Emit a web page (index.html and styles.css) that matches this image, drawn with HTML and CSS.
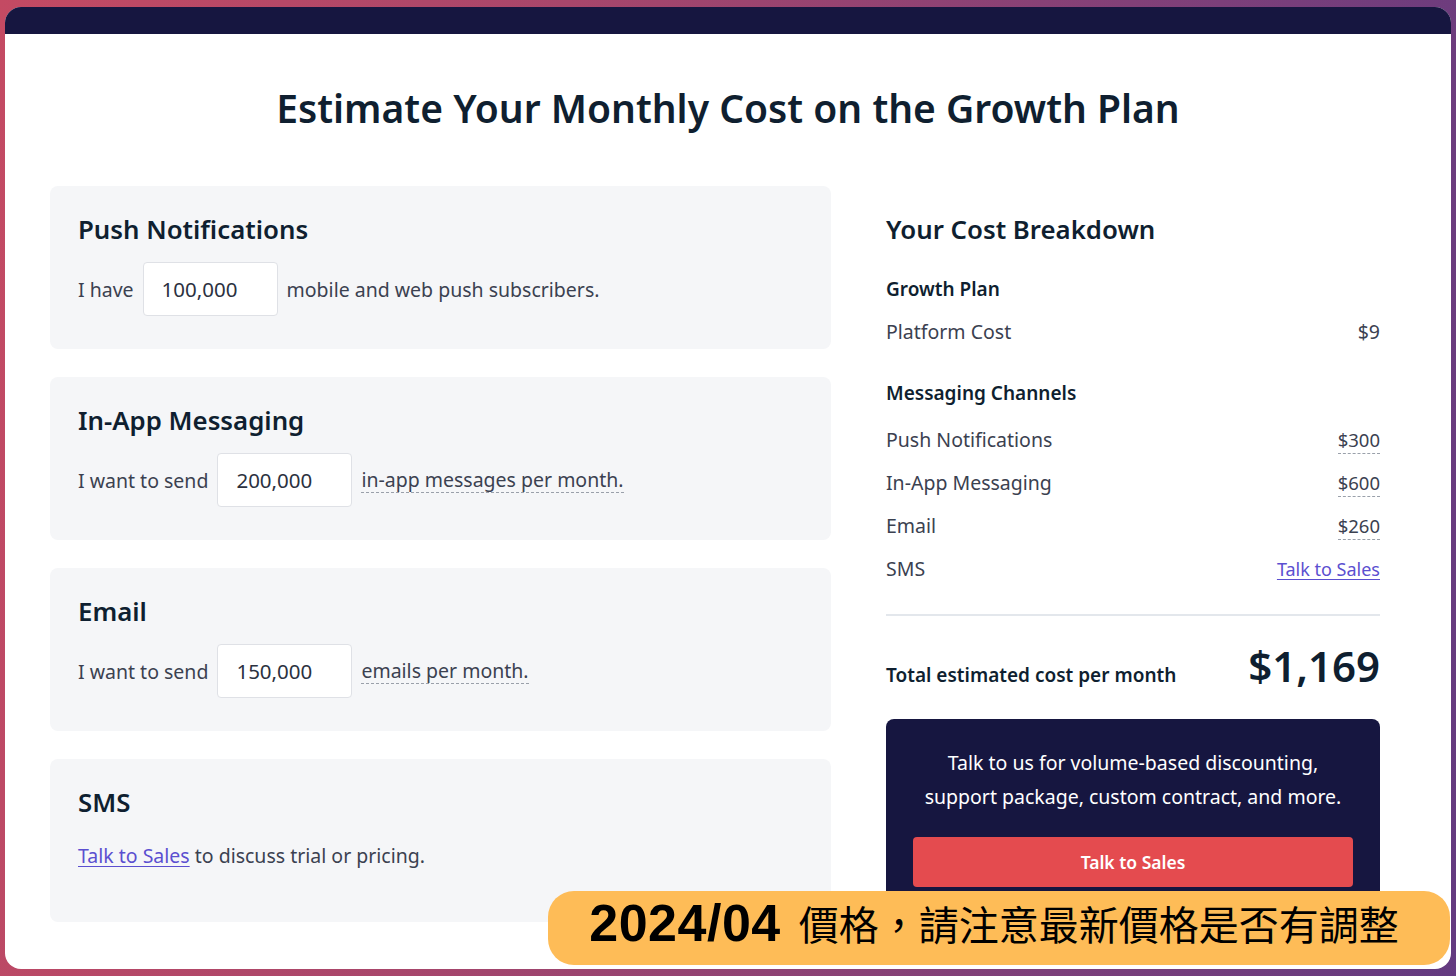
FILE: index.html
```html
<!DOCTYPE html>
<html lang="en">
<head>
<meta charset="utf-8">
<title>Estimate Your Monthly Cost</title>
<link rel="stylesheet" href="styles.css">
</head>
<body>
<div class="frame">
  <div class="panel">
    <div class="topbar"></div>
    <h1 class="title">Estimate Your Monthly Cost on the Growth Plan</h1>
    <div class="content">
      <div class="grid">
        <div class="left">
          <section class="card">
            <h2 class="card-title">Push Notifications</h2>
            <div class="row">
              <span>I have</span>
              <span class="input">100,000</span>
              <span>mobile and web push subscribers.</span>
            </div>
          </section>
          <section class="card">
            <h2 class="card-title">In-App Messaging</h2>
            <div class="row">
              <span>I want to send</span>
              <span class="input">200,000</span>
              <span class="dotted">in-app messages per month.</span>
            </div>
          </section>
          <section class="card">
            <h2 class="card-title">Email</h2>
            <div class="row">
              <span>I want to send</span>
              <span class="input">150,000</span>
              <span class="dotted">emails per month.</span>
            </div>
          </section>
          <section class="card">
            <h2 class="card-title">SMS</h2>
            <p class="sms-text"><a class="link" href="#">Talk to Sales</a> to discuss trial or pricing.</p>
          </section>
        </div>
        <aside class="right">
          <h2 class="card-title">Your Cost Breakdown</h2>
          <h3 class="sub sub-first">Growth Plan</h3>
          <div class="line line-platform"><span>Platform Cost</span><span>$9</span></div>
          <h3 class="sub sub-second">Messaging Channels</h3>
          <div class="lines">
            <div class="line"><span>Push Notifications</span><span class="price">$300</span></div>
            <div class="line"><span>In-App Messaging</span><span class="price">$600</span></div>
            <div class="line"><span>Email</span><span class="price">$260</span></div>
            <div class="line"><span>SMS</span><a class="link link-small" href="#">Talk to Sales</a></div>
          </div>
          <hr class="divider">
          <div class="total">
            <span class="total-label">Total estimated cost per month</span>
            <span class="total-value">$1,169</span>
          </div>
          <div class="cta">
            <p class="cta-text">Talk to us for volume-based discounting,<br>support package, custom contract, and more.</p>
            <a class="cta-btn" href="#">Talk to Sales</a>
          </div>
        </aside>
      </div>
    </div>
  </div>
</div>
<div class="banner"><span class="banner-date">2024/04</span><span class="banner-cjk">價格，請注意最新價格是否有調整</span></div>
</body>
</html>
```
FILE: styles.css
```css
html, body {
  margin: 0;
  padding: 0;
}
body {
  width: 1456px;
  height: 976px;
  overflow: hidden;
  background: linear-gradient(100deg, #c44a63 0%, #a8466b 35%, #7c3f7a 75%, #633a80 100%);
  font-family: "Noto Sans", "Lato", sans-serif;
  color: #3b4150;
  position: relative;
}
.frame {
  padding: 7px 5px 7px 5px;
  height: 976px;
  box-sizing: border-box;
}
.panel {
  background: #ffffff;
  border-radius: 16px;
  overflow: hidden;
  height: 962px;
}
.topbar {
  height: 27px;
  background: #161640;
}
.content {
  padding: 0 71px 0 45px;
}
.title {
  margin: 50px 0 54px;
  font-size: 39px;
  line-height: 48px;
  font-weight: 600;
  text-align: center;
  color: #0f1f30;
}
.grid {
  display: flex;
  gap: 55px;
}
.left {
  width: 781px;
  display: flex;
  flex-direction: column;
  gap: 28px;
}
.card {
  height: 163px;
  box-sizing: border-box;
  background: #f5f6f8;
  border-radius: 8px;
  padding: 27px 28px 0;
}
.card-title {
  margin: 0;
  font-size: 25.8px;
  line-height: 32px;
  font-weight: 600;
  color: #0f1f30;
}
.row {
  display: flex;
  align-items: center;
  gap: 9px;
  margin-top: 17px;
  font-size: 19.5px;
}
.input {
  width: 135px;
  height: 54px;
  box-sizing: border-box;
  background: #fff;
  border: 1px solid #dfe1e6;
  border-radius: 4px;
  padding: 0 18px;
  display: flex;
  align-items: center;
  font-size: 20.5px;
  color: #2b3140;
}
.dotted {
  border-bottom: 1px dashed #9aa0aa;
  line-height: 24px;
}
.sms-text {
  margin: 24px 0 0;
  font-size: 19.5px;
  line-height: 28px;
}
.link {
  color: #5b4fd0;
  text-decoration: underline;
  text-underline-offset: 3px;
}
.link-small {
  font-size: 18px;
}
.right {
  width: 494px;
  padding-top: 27px;
}
.sub {
  margin: 0;
  font-size: 19px;
  line-height: 28px;
  font-weight: 600;
  color: #0f1f30;
}
.sub-first { margin-top: 30px; }
.sub-second { margin-top: 33px; }
.line {
  display: flex;
  justify-content: space-between;
  align-items: flex-start;
  font-size: 19.5px;
  line-height: 28px;
}
.line-platform { margin-top: 15px; }
.lines {
  margin-top: 19px;
  display: flex;
  flex-direction: column;
  gap: 15px;
}
.price {
  font-size: 18.5px;
  line-height: 27px;
  border-bottom: 1px dashed #9aa0aa;
}
.divider {
  margin: 31px 0 0;
  border: 0;
  border-top: 2px solid #e3e7ec;
}
.total {
  display: flex;
  justify-content: space-between;
  align-items: baseline;
  margin-top: 26px;
}
.total-label {
  font-size: 19px;
  font-weight: 600;
  color: #0f1f30;
}
.total-value {
  font-size: 42px;
  line-height: 48px;
  font-weight: 600;
  color: #0f1f30;
}
.cta {
  margin-top: 29px;
  background: #161640;
  border-radius: 8px;
  padding: 27px 27px 27px;
  text-align: center;
}
.cta-text {
  margin: 0;
  color: #ffffff;
  font-size: 19.5px;
  line-height: 34px;
}
.cta-btn {
  display: block;
  margin-top: 23px;
  height: 50px;
  line-height: 50px;
  background: #e44b4f;
  border-radius: 4px;
  color: #fff;
  font-size: 17.5px;
  font-weight: 600;
  text-decoration: none;
}
.banner {
  position: absolute;
  left: 548px;
  top: 891px;
  width: 902px;
  height: 74px;
  box-sizing: border-box;
  padding: 0 10px 10px 0;
  background: #febc57;
  border-radius: 26px;
  display: flex;
  align-items: center;
  justify-content: center;
  gap: 18px;
  color: #000;
}
.banner-date {
  font-family: "Liberation Sans Narrow", "Liberation Sans", sans-serif;
  font-weight: 700;
  font-size: 52px;
  line-height: 60px;
  letter-spacing: 0.5px;
}
.banner-cjk {
  font-family: "Noto Sans CJK TC", sans-serif;
  font-size: 40px;
  line-height: 60px;
  font-weight: 400;
}
```
